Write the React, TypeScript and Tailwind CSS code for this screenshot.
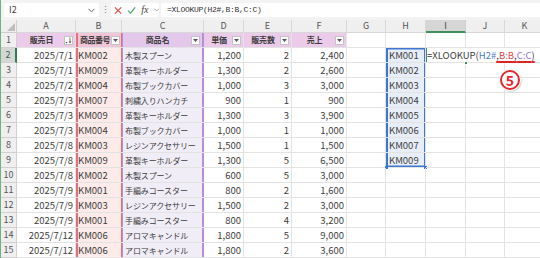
import React from "react";

const COL_LETTERS = ["A", "B", "C", "D", "E", "F", "G", "H", "I", "J", "K"];

const HEADERS = ["販売日", "商品番号", "商品名", "単価", "販売数", "売上"];

const ROWS = [
  ["2025/7/1", "KM002", "木製スプーン", "1,200", "2", "2,400"],
  ["2025/7/1", "KM009", "革製キーホルダー", "1,300", "2", "2,600"],
  ["2025/7/2", "KM004", "布製ブックカバー", "1,000", "3", "3,000"],
  ["2025/7/3", "KM007", "刺繍入りハンカチ", "900", "1", "900"],
  ["2025/7/3", "KM009", "革製キーホルダー", "1,300", "3", "3,900"],
  ["2025/7/3", "KM004", "布製ブックカバー", "1,000", "1", "1,000"],
  ["2025/7/8", "KM003", "レジンアクセサリー", "1,500", "1", "1,500"],
  ["2025/7/8", "KM009", "革製キーホルダー", "1,300", "5", "6,500"],
  ["2025/7/8", "KM002", "木製スプーン", "600", "5", "3,000"],
  ["2025/7/9", "KM001", "手編みコースター", "800", "2", "1,600"],
  ["2025/7/9", "KM003", "レジンアクセサリー", "1,500", "2", "3,000"],
  ["2025/7/9", "KM001", "手編みコースター", "800", "4", "3,200"],
  ["2025/7/12", "KM006", "アロマキャンドル", "1,800", "5", "9,000"],
  ["2025/7/12", "KM006", "アロマキャンドル", "1,800", "2", "3,600"],
];

const SPILL = ["KM001", "KM002", "KM003", "KM004", "KM005", "KM006", "KM007", "KM009"];

const cell =
  "relative h-[15px] border-r border-b border-[#e3e3e3] px-[2px] text-[9.5px] leading-[14px] whitespace-nowrap";

// blue outline of the spilled range H2:H9
const spillTop = " shadow-[inset_2px_0_0_#3f76d0,inset_-1px_0_0_#3f76d0,inset_0_1.5px_0_#3f76d0]";
const spillMid = " shadow-[inset_2px_0_0_#3f76d0,inset_-1px_0_0_#3f76d0]";
const spillBottom = " shadow-[inset_2px_0_0_#3f76d0,inset_-1px_0_0_#3f76d0,inset_0_-1.5px_0_#3f76d0]";

const headFill = " flex items-center overflow-hidden pr-[2px]";

export default function App() {
  return (
    <div className="relative h-[258px] w-[540px] overflow-hidden border-l border-[#6db37f] bg-white font-['Noto_Sans_CJK_JP',sans-serif] text-[#3d3d3d]">
      <FormulaBar />
      <Sheet />
      {/* annotation badge */}
      <div className="absolute left-[499px] top-[70px] flex h-[20px] w-[20px] items-center justify-center rounded-full border-2 border-[#e8262b] bg-white text-[14px] leading-none font-bold text-[#e8262b] shadow-[0_0_0_1px_#fff,1px_1px_2px_rgba(0,0,0,0.45)]">
        5
      </div>
    </div>
  );
}

function FormulaBar() {
  return (
    <div className="flex h-[20px] items-start bg-[#f3f3f3] pt-[3px]">
      <div className="ml-[3px] flex h-[14px] w-[95px] items-center rounded-[2px] bg-white pl-[5px] pr-[4px] text-[9px] text-[#444]">
        <span className="flex-1">I2</span>
        <svg width="7" height="5" viewBox="0 0 7 5" fill="none" stroke="#666" strokeWidth="1">
          <path d="M0.5 0.8 L3.5 3.8 L6.5 0.8" />
        </svg>
      </div>
      <div className="w-[12px] text-center text-[9px] leading-[14px] text-[#777]">⋮</div>
      <div className="flex h-[14px] w-[48px] items-center gap-[5px] rounded-[2px] bg-white pl-[3px]">
        <svg width="9" height="9" viewBox="0 0 9 9" stroke="#e04848" strokeWidth="1.2">
          <path d="M1 1 L8 8 M8 1 L1 8" />
        </svg>
        <svg width="10" height="9" viewBox="0 0 10 9" fill="none" stroke="#3aa05a" strokeWidth="1.2">
          <path d="M1 4.5 L3.8 7.5 L9 1" />
        </svg>
        <span className="font-['Liberation_Serif',serif] text-[10px] italic leading-none text-[#444]">fx</span>
        <svg width="6" height="4" viewBox="0 0 6 4" fill="none" stroke="#999" strokeWidth="0.9">
          <path d="M0.5 0.5 L3 3 L5.5 0.5" />
        </svg>
      </div>
      <div className="ml-[2px] flex h-[14px] flex-1 items-center rounded-l-[2px] bg-white pl-[6px] font-['Liberation_Mono',monospace] text-[8px] tracking-[-0.3px] text-[#333]">
        =XLOOKUP(H2#,B:B,C:C)
      </div>
    </div>
  );
}

function FilterButton({ sorted }: { sorted?: boolean }) {
  return (
    <span className="flex h-[9px] w-[9px] shrink-0 items-center justify-center border border-[#c4c4c4] bg-white">
      {sorted ? (
        <svg width="7" height="7" viewBox="0 0 7 7" fill="#555">
          <path d="M0.5 5 L2.5 5 L1.5 6.5 Z" />
          <rect x="4.6" y="0.5" width="0.8" height="4.5" />
          <path d="M3.6 4.5 L6.4 4.5 L5 6.5 Z" />
        </svg>
      ) : (
        <svg width="5" height="3" viewBox="0 0 5 3" fill="#555">
          <path d="M0 0 L5 0 L2.5 3 Z" />
        </svg>
      )}
    </span>
  );
}

function HeadLabel({ text, sorted, align = "center" }: { text: string; sorted?: boolean; align?: "center" | "left" }) {
  return (
    <>
      <span
        className={
          align === "left"
            ? "min-w-0 flex-1 pl-[2px] text-[8px] font-bold tracking-[-0.5px]"
            : "min-w-0 flex-1 overflow-hidden text-center text-[8px] font-bold tracking-[-0.2px]"
        }
      >
        {text}
      </span>
      <FilterButton sorted={sorted} />
    </>
  );
}

function Sheet() {
  const rows = [];
  for (let r = 1; r <= 15; r++) {
    const data = r >= 2 ? ROWS[r - 2] : null;
    const spill = r >= 2 && r <= 9 ? SPILL[r - 2] : null;
    const spillCls = r === 2 ? spillTop : r === 9 ? spillBottom : spillMid;
    rows.push(
      <React.Fragment key={r}>
        <div
          className={
            r === 2
              ? "h-[15px] border-b border-r-2 border-[#d0d0d0] border-r-[#2e7d4f] bg-[#d6d6d6] text-center text-[9px] leading-[14px] text-[#2e6b45]"
              : "h-[15px] border-r border-b border-[#d0d0d0] bg-[#efefef] text-center text-[9px] leading-[14px] text-[#555]"
          }
        >
          {r}
        </div>
        {/* A */}
        {r === 1 ? (
          <div className={cell + headFill + " bg-[#eccbea]"}>
            <HeadLabel text={HEADERS[0]} sorted />
          </div>
        ) : (
          <div className={cell + " text-right"}>{data![0]}</div>
        )}
        {/* B */}
        {r === 1 ? (
          <div className={cell + headFill + " border-r-0 bg-[#f1c4d8] pr-[2px] shadow-[inset_2px_0_0_#e0707c,inset_-1px_0_0_#e0707c]"}>
            <HeadLabel text={HEADERS[1]} align="left" />
          </div>
        ) : (
          <div className={cell + " border-r-0 bg-[#fcebe9] shadow-[inset_2px_0_0_#e0707c,inset_-1px_0_0_#e0707c]"}>
            {data![1]}
          </div>
        )}
        {/* C */}
        {r === 1 ? (
          <div className={cell + headFill + " border-r-0 bg-[#e4c8ec] pr-[4px] shadow-[inset_1px_0_0_#b48fd6,inset_-2px_0_0_#b48fd6]"}>
            <HeadLabel text={HEADERS[2]} />
          </div>
        ) : (
          <div className={cell + " border-r-0 bg-[#f1edf7] pl-[3px] shadow-[inset_1px_0_0_#b48fd6,inset_-2px_0_0_#b48fd6]"}>
            <span className="text-[8px] tracking-[-0.1px]">{data![2]}</span>
          </div>
        )}
        {/* D E F */}
        {[3, 4, 5].map((c) =>
          r === 1 ? (
            <div key={c} className={cell + headFill + " bg-[#eccbea]"}>
              <HeadLabel text={HEADERS[c]} />
            </div>
          ) : (
            <div key={c} className={cell + " text-right"}>
              {data![c]}
            </div>
          )
        )}
        {/* G */}
        <div className={cell} />
        {/* H */}
        <div className={spill ? cell + " bg-[#e8eef8] pl-[3px]" + spillCls : cell}>
          {spill}
          {r === 9 && (
            <>
              <span className="absolute bottom-[-2px] left-[-1px] h-[3px] w-[3px] bg-[#3f76d0]" />
              <span className="absolute bottom-[-2px] right-[-2px] h-[3px] w-[3px] bg-[#3f76d0]" />
            </>
          )}
        </div>
        {/* I */}
        {r === 2 ? (
          <div className={cell + " z-10 pl-[1px] shadow-[inset_0_0_0_2px_#3f8f5f]"}>
            <span className="relative z-10 bg-white pr-[1px]">
              =XLOOKUP(<span className="text-[#4a7fd0]">H2#</span>
              <span className="underline decoration-[#e02323] decoration-2 underline-offset-[2px]">
                ,<span className="text-[#d84a4a]">B:B</span>,<span className="text-[#9a72d0]">C:C</span>)
              </span>
            </span>
            <span className="absolute bottom-[-3px] right-[-3px] h-[4px] w-[4px] border border-white bg-[#3f8f5f]" />
          </div>
        ) : (
          <div className={cell} />
        )}
        {/* J K */}
        <div className={cell} />
        <div className={cell} />
      </React.Fragment>
    );
  }

  return (
    <div className="grid grid-cols-[16px_59px_46px_82px_40px_48px_55px_39px_40px_40px_39px_40px]">
      {/* column headers */}
      <div className="flex h-[13px] items-end justify-end border-r border-b border-[#cfcfcf] bg-[#efefef] p-[1px]">
        <svg width="8" height="8" viewBox="0 0 8 8" fill="#bdbdbd">
          <path d="M8 0 L8 8 L0 8 Z" />
        </svg>
      </div>
      {COL_LETTERS.map((l) => (
        <div
          key={l}
          className={
            l === "I"
              ? "h-[13px] border-r border-b-2 border-[#cfcfcf] border-b-[#3f8f5f] bg-[#d6d6d6] text-center text-[9px] leading-[12px] text-[#444]"
              : "h-[13px] border-r border-b border-[#d8d8d8] bg-[#efefef] text-center text-[9px] leading-[12px] text-[#555]"
          }
        >
          {l}
        </div>
      ))}
      {rows}
    </div>
  );
}
